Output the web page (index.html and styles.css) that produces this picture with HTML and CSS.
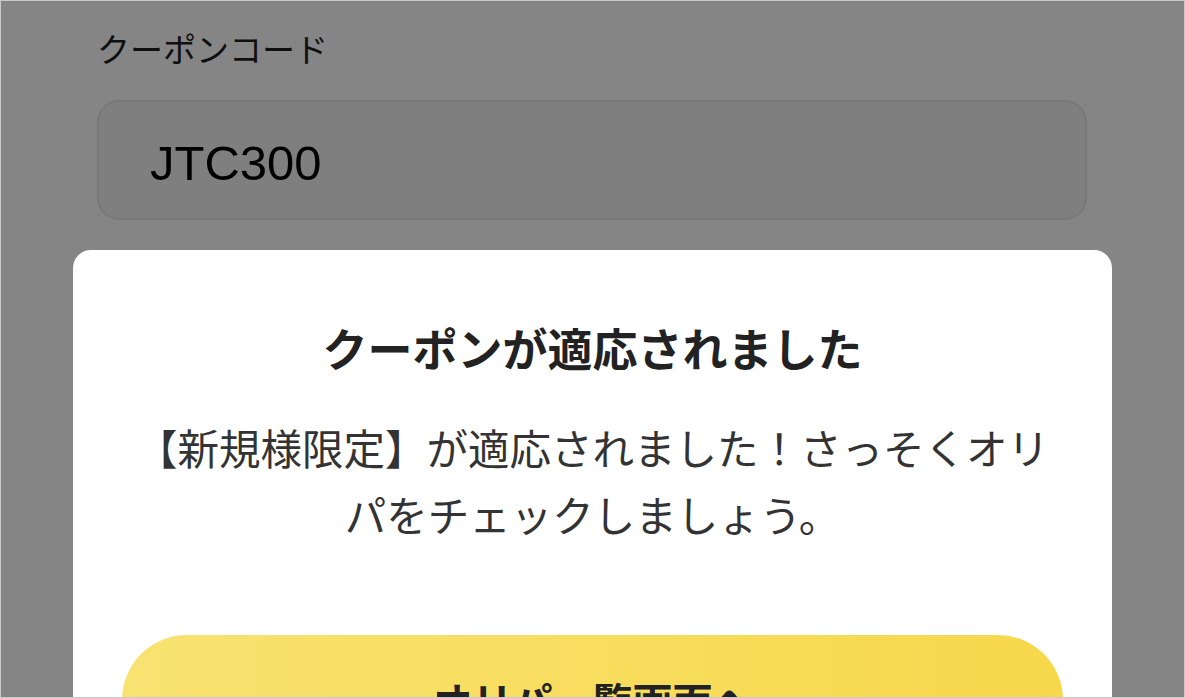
FILE: index.html
```html
<!DOCTYPE html>
<html lang="ja">
<head>
    <meta charset="UTF-8">
    <meta name="viewport" content="width=device-width, initial-scale=1.0">
    <title>クーポンコード</title>
    <link rel="stylesheet" href="styles.css">
</head>
<body>
    <div class="screen">
        <div class="page">
            <label class="field-label" for="couponCode">クーポンコード</label>
            <div class="code-input" id="couponCode">JTC300</div>
        </div>

        <div class="overlay"></div>

        <div class="dialog">
            <h2 class="dialog-title">クーポンが適応されました</h2>
            <p class="dialog-text">【新規様限定】が適応されました！さっそくオリパをチェックしましょう。</p>
            <button class="btn-primary">オリパ一覧画面へ</button>
        </div>
    </div>
</body>
</html>
```

FILE: styles.css
```css
* {
    margin: 0;
    padding: 0;
    box-sizing: border-box;
}

body {
    font-family: "Noto Sans CJK JP", "Noto Sans", sans-serif;
    background: #ffffff;
    color: #222;
}

.screen {
    position: relative;
    height: 100vh;
    overflow: hidden;
    border: 1px solid #cacaca;
    background: #ffffff;
}

.page {
    padding: 23px 97px 0 96px;
}

.field-label {
    display: block;
    font-size: 33px;
    line-height: 48px;
    color: #1e1e1e;
    margin-bottom: 28px;
}

.code-input {
    display: flex;
    align-items: center;
    height: 120px;
    padding: 5px 0 0 51px;
    background: #f4f4f4;
    border: 2px solid #e6e6e6;
    border-radius: 22px;
    font-family: "Liberation Sans", Arial, sans-serif;
    font-size: 49px;
    color: #000;
}

/* dim everything behind the dialog */
.overlay {
    position: absolute;
    inset: 0;
    background: rgba(0, 0, 0, 0.48);
}

.dialog {
    position: absolute;
    top: 249px;
    left: 72px;
    right: 72px;
    height: 600px;
    padding: 65px 49px 0;
    background: #ffffff;
    border-radius: 18px;
    text-align: center;
}

.dialog-title {
    font-size: 45px;
    line-height: 66px;
    font-weight: 700;
    color: #222;
}

.dialog-text {
    margin-top: 33px;
    font-size: 41.5px;
    line-height: 67px;
    color: #333;
}

.btn-primary {
    display: block;
    width: 100%;
    height: 130px;
    margin-top: 87px;
    border: none;
    border-radius: 65px;
    background: linear-gradient(90deg, #f8e271 0%, #f7d84b 100%);
    font-family: inherit;
    font-size: 40px;
    font-weight: 700;
    color: #222;
    cursor: pointer;
}
```
